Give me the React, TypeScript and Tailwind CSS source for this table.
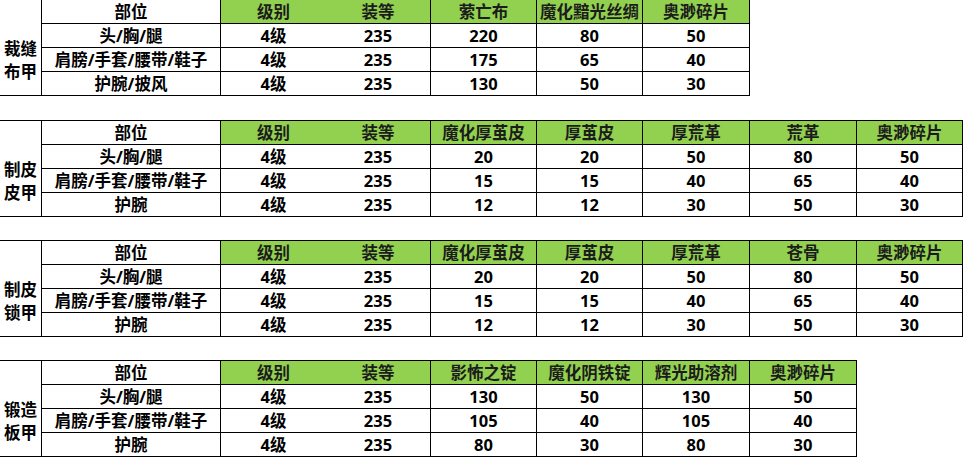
import { Fragment } from 'react'

interface Recipe {
  label: [string, string]
  mats: string[]
  rows: Array<{ slot: string; values: number[] }>
}

const WIDTHS = [42, 179, 105, 105, 106, 106, 107, 107, 106]

const recipes: Recipe[] = [
  {
    label: ['裁缝', '布甲'],
    mats: ['萦亡布', '魔化黯光丝绸', '奥渺碎片'],
    rows: [
      { slot: '头/胸/腿', values: [220, 80, 50] },
      { slot: '肩膀/手套/腰带/鞋子', values: [175, 65, 40] },
      { slot: '护腕/披风', values: [130, 50, 30] },
    ],
  },
  {
    label: ['制皮', '皮甲'],
    mats: ['魔化厚茧皮', '厚茧皮', '厚荒革', '荒革', '奥渺碎片'],
    rows: [
      { slot: '头/胸/腿', values: [20, 20, 50, 80, 50] },
      { slot: '肩膀/手套/腰带/鞋子', values: [15, 15, 40, 65, 40] },
      { slot: '护腕', values: [12, 12, 30, 50, 30] },
    ],
  },
  {
    label: ['制皮', '锁甲'],
    mats: ['魔化厚茧皮', '厚茧皮', '厚荒革', '苍骨', '奥渺碎片'],
    rows: [
      { slot: '头/胸/腿', values: [20, 20, 50, 80, 50] },
      { slot: '肩膀/手套/腰带/鞋子', values: [15, 15, 40, 65, 40] },
      { slot: '护腕', values: [12, 12, 30, 50, 30] },
    ],
  },
  {
    label: ['锻造', '板甲'],
    mats: ['影怖之锭', '魔化阴铁锭', '辉光助溶剂', '奥渺碎片'],
    rows: [
      { slot: '头/胸/腿', values: [130, 50, 130, 50] },
      { slot: '肩膀/手套/腰带/鞋子', values: [105, 40, 105, 40] },
      { slot: '护腕', values: [80, 30, 80, 30] },
    ],
  },
]

function RecipeTable({ recipe, first }: { recipe: Recipe; first: boolean }) {
  const cols = WIDTHS.slice(0, 4 + recipe.mats.length)
  return (
    <div
      className={first ? 'grid' : 'grid border-t border-black'}
      style={{ gridTemplateColumns: cols.map((w) => `${w}px`).join(' ') }}
    >
      {/* crafting label spans the whole table, text centred on the data rows */}
      <div className="row-span-4 flex flex-col items-center justify-center border-r border-b border-black pt-[24px] text-[16.5px] leading-[23px]">
        <span>{recipe.label[0]}</span>
        <span>{recipe.label[1]}</span>
      </div>

      {/* header */}
      <div className="h-[24px] border-r border-b border-black bg-white text-center leading-[23px]">部位</div>
      <div className="h-[24px] border-b border-black bg-[#92d050] text-center leading-[23px] text-[#1c1c1c]">级别</div>
      <div className="h-[24px] border-r border-b border-black bg-[#92d050] text-center leading-[23px] text-[#1c1c1c]">装等</div>
      {recipe.mats.map((m) => (
        <div
          key={m}
          className="h-[24px] border-r border-b border-black bg-[#92d050] text-center leading-[23px] text-[#1c1c1c]"
        >
          {m}
        </div>
      ))}

      {recipe.rows.map((row) => (
        <Fragment key={row.slot}>
          <div className="h-[24px] border-r border-b border-black text-center leading-[23px]">{row.slot}</div>
          <div className="h-[24px] border-b border-black text-center leading-[23px]">4级</div>
          <div className="h-[24px] border-r border-b border-black text-center leading-[23px]">235</div>
          {row.values.map((v, i) => (
            <div key={i} className="h-[24px] border-r border-b border-black text-center leading-[23px]">
              {v}
            </div>
          ))}
        </Fragment>
      ))}
    </div>
  )
}

export default function App() {
  return (
    <div
      className="h-[457px] w-[965px] overflow-hidden bg-white text-[16.5px] font-bold text-black"
      style={{ fontFamily: '"Open Sans", "Noto Sans CJK SC", sans-serif' }}
    >
      <div className="flex flex-col items-start">
        {recipes.map((r, i) => (
          <div key={r.label.join()} className={i === 0 ? '' : i === 1 ? 'mt-[24px]' : 'mt-[23px]'}>
            <RecipeTable recipe={r} first={i === 0} />
          </div>
        ))}
      </div>
    </div>
  )
}
